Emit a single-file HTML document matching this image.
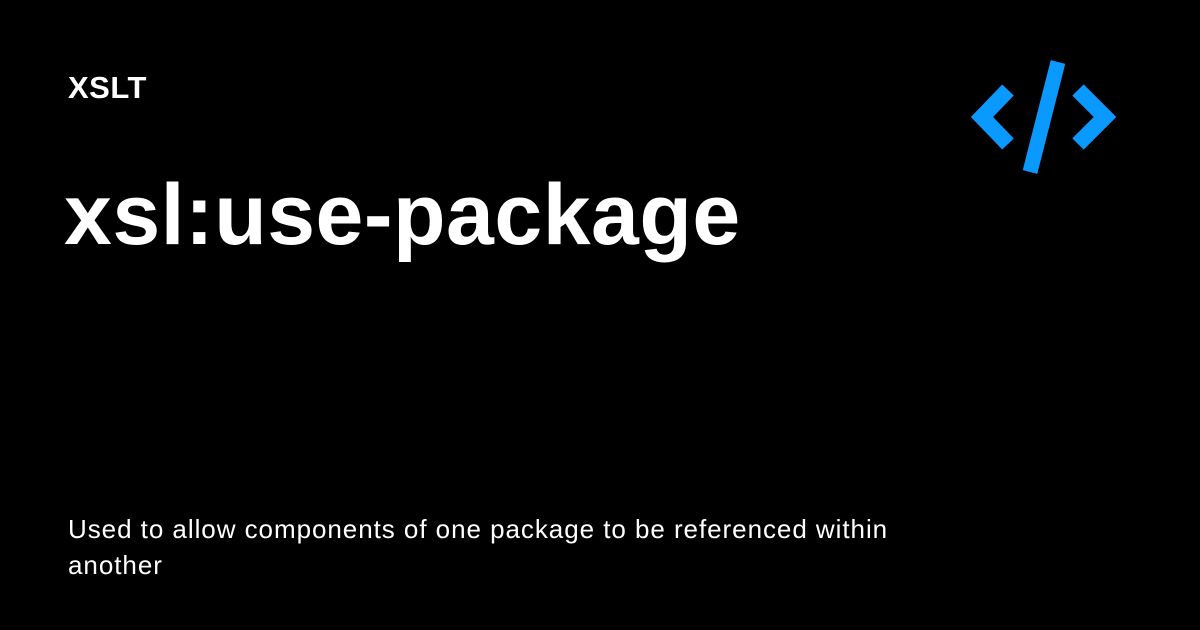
<!DOCTYPE html>
<html><head><style>
body{margin:0;width:1200px;height:630px;background:#000;overflow:hidden;font-family:"Liberation Sans",Arial,sans-serif;color:#fff;position:relative}
.k{position:absolute;left:68px;top:70px;font-size:31px;font-weight:bold;letter-spacing:0.5px}
.t{position:absolute;left:64px;top:166px;font-size:86px;font-weight:bold;letter-spacing:0.5px}
.d{position:absolute;left:68px;top:511px;font-size:26px;line-height:36px;width:850px;letter-spacing:0.95px}
svg{position:absolute;left:0;top:0}
</style></head><body>
<div class="k">XSLT</div>
<div class="t">xsl:use-package</div>
<div class="d">Used to allow components of one package to be referenced within another</div>
<svg width="1200" height="630"><g fill="none" stroke="#0a99ff" stroke-width="16" stroke-linejoin="miter" stroke-linecap="butt">
<polyline points="1008,90 982,117 1008,144"/>
<polyline points="1078,90 1105,117 1078,144"/>
<line x1="1058" y1="62" x2="1030" y2="172" stroke-width="15"/>
</g></svg>
</body></html>
